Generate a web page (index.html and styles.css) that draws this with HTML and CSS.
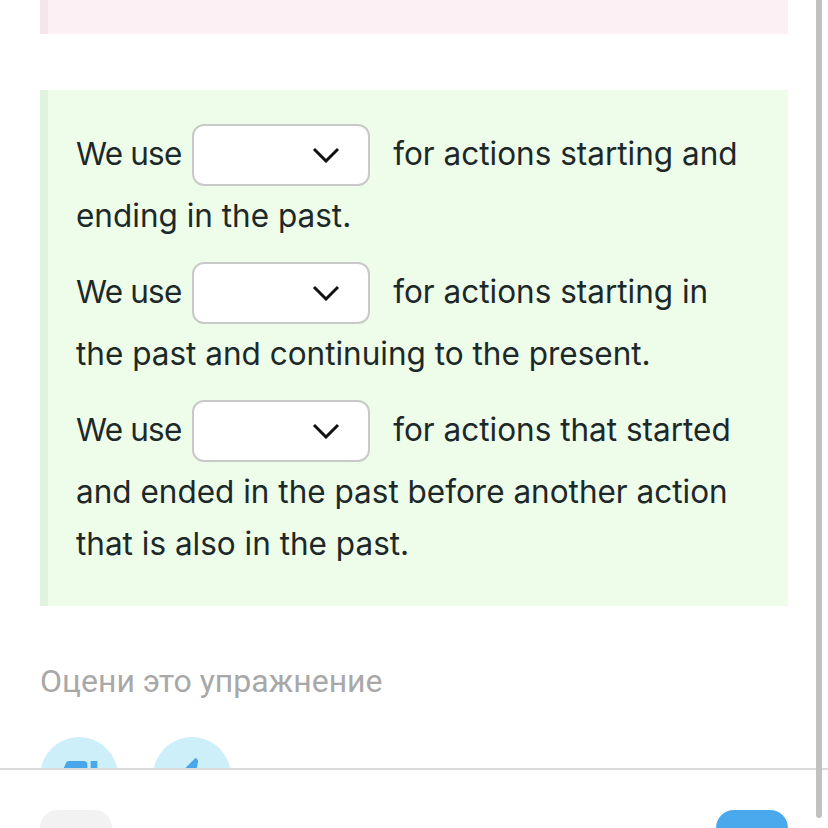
FILE: index.html
```html
<!DOCTYPE html>
<html lang="en">
	<head>
		<meta charset="UTF-8" />
		<meta name="viewport" content="width=device-width, initial-scale=1.0" />
		<title>Exercise</title>
		<link rel="stylesheet" href="styles.css">
	</head>
	<body>
		<div class="page">
			<div class="card card-pink"></div>

			<div class="card card-green">
				<p class="line">
					<span class="lead">We use</span>
					<span class="gap"><svg class="chevron" viewBox="0 0 28 16"><path d="M2 2 L14 14 L26 2" /></svg></span>
					for actions starting and ending in the past.
				</p>
				<p class="line">
					<span class="lead">We use</span>
					<span class="gap"><svg class="chevron" viewBox="0 0 28 16"><path d="M2 2 L14 14 L26 2" /></svg></span>
					for actions starting in the past and continuing to the present.
				</p>
				<p class="line">
					<span class="lead">We use</span>
					<span class="gap"><svg class="chevron" viewBox="0 0 28 16"><path d="M2 2 L14 14 L26 2" /></svg></span>
					for actions that started and ended in the past before another action that is also in the past.
				</p>
			</div>

			<div class="rate">
				<h3 class="rate-title">Оцени это упражнение</h3>
				<div class="rate-buttons">
					<a class="rate-btn" href="javascript:;">
						<svg viewBox="0 0 24 24"><path d="M15 3H6c-.83 0-1.54.5-1.84 1.22l-3.02 7.05c-.09.23-.14.47-.14.73v2c0 1.1.9 2 2 2h6.31l-.95 4.57-.03.32c0 .41.17.79.44 1.06L9.83 23l6.59-6.59c.36-.36.58-.86.58-1.41V5c0-1.1-.9-2-2-2zm4 0v12h4V3h-4z" /></svg>
					</a>
					<a class="rate-btn" href="javascript:;">
						<svg viewBox="0 0 24 24"><path d="M1 21h4V9H1v12zm22-11c0-1.1-.9-2-2-2h-6.31l.95-4.57.03-.32c0-.41-.17-.79-.44-1.06L14.17 1 7.59 7.59C7.22 7.95 7 8.45 7 9v10c0 1.1.9 2 2 2h9c.83 0 1.54-.5 1.84-1.22l3.02-7.05c.09-.23.14-.47.14-.73v-2z" /></svg>
					</a>
				</div>
			</div>
		</div>

		<!-- нижняя панель поверх контента -->
		<div class="bottom-bar">
			<a class="bar-btn bar-btn-grey" href="javascript:;"></a>
			<a class="bar-btn bar-btn-blue" href="javascript:;"></a>
		</div>

		<div class="scroll-thumb"></div>
	</body>
</html>
```

FILE: styles.css
```css
* {
	margin: 0;
	padding: 0;
	box-sizing: border-box;
}
html,
body {
	height: 100%;
	overflow: hidden;
}
body {
	background-color: #fff;
	font-family: Inter, "Liberation Sans", sans-serif;
	color: #1d2828;
}
.page {
	padding: 0 40px;
}
.card {
	border-left: 8px solid;
}
.card-pink {
	height: 34px;
	background-color: #fdf0f4;
	border-left-color: #f4e6ea;
}
.card-green {
	margin-top: 56px;
	padding: 32px 38px 36px 28px;
	background-color: #eefcea;
	border-left-color: #e0f3de;
}
.line {
	font-size: 31.5px;
	line-height: 52px;
	margin-bottom: 18px;
}
.line:last-child {
	margin-bottom: 0;
}
.lead {
	letter-spacing: -0.8px;
}
.gap {
	display: inline-flex;
	align-items: center;
	justify-content: flex-end;
	width: 178px;
	height: 62px;
	margin: 2px 14px 4px 2px;
	padding-right: 28px;
	vertical-align: middle;
	background-color: #fff;
	border: 2px solid #c9c9c9;
	border-radius: 12px;
}
.chevron {
	width: 28px;
	height: 16px;
	fill: none;
	stroke: #111;
	stroke-width: 3;
}
.rate {
	padding-top: 56px;
}
.rate-title {
	font-family: Roboto, "Liberation Sans", sans-serif;
	font-weight: 400;
	font-size: 32px;
	color: #a8a8a8;
}
.rate-buttons {
	display: flex;
	gap: 35px;
	margin-top: 37px;
}
.rate-btn {
	display: flex;
	align-items: center;
	justify-content: center;
	width: 78px;
	height: 78px;
	border-radius: 50%;
	background-color: #cdeffa;
}
.rate-btn svg {
	width: 40px;
	height: 40px;
	fill: #4aa6ea;
}
.bottom-bar {
	position: fixed;
	left: 0;
	right: 0;
	top: 768px;
	bottom: 0;
	display: flex;
	justify-content: space-between;
	padding: 40px 40px 0;
	background-color: #fff;
	border-top: 2px solid #dadada;
}
.bar-btn {
	width: 72px;
	height: 60px;
	border-radius: 18px;
}
.bar-btn-grey {
	background-color: #f2f2f2;
}
.bar-btn-blue {
	background-color: #4aa8ec;
}
.scroll-thumb {
	position: fixed;
	top: 0;
	right: 6px;
	width: 6px;
	height: 818px;
	background-color: #c1c1c1;
	border-radius: 0 0 3px 3px;
}
```
